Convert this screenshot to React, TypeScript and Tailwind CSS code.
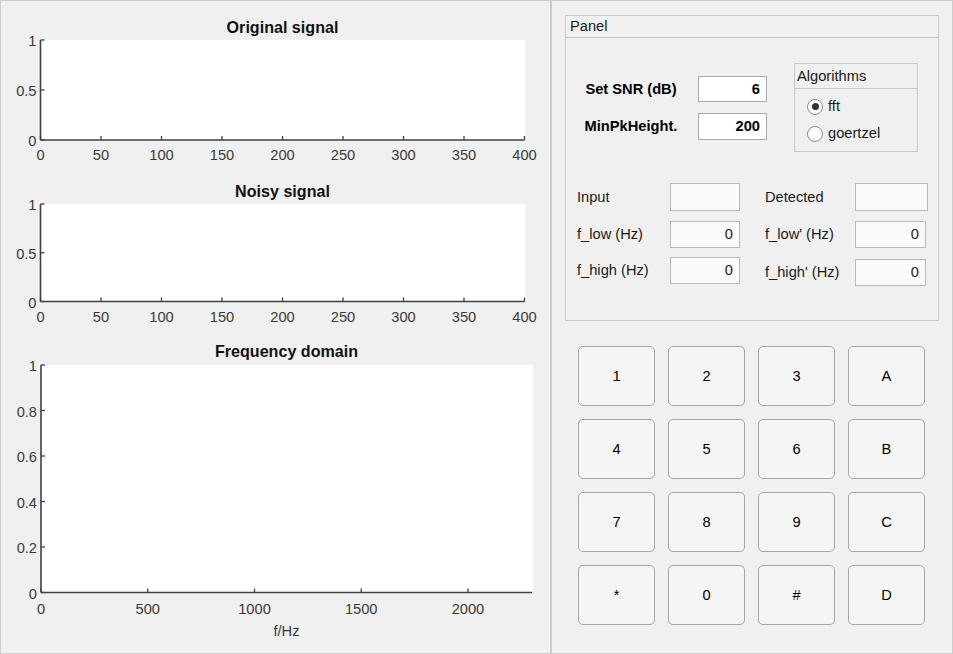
import React from "react";

type Tick = [number, string];

interface AxesProps {
  h: number;
  title: string;
  titleBase: number;
  x0: number;
  x1: number;
  top: number;
  bottom: number;
  xmax: number;
  xticks: Tick[];
  yticks: Tick[];
  xlabelBase: number;
  xlabel?: string;
  xlabelBaseline?: number;
}

function Axes({ h, title, titleBase, x0, x1, top, bottom, xmax, xticks, yticks, xlabelBase, xlabel, xlabelBaseline }: AxesProps) {
  const px = (v: number) => x0 + (v / xmax) * (x1 - x0);
  const py = (v: number) => bottom - v * (bottom - top);
  const axis = "#404040";
  return (
    <svg width={549} height={h} className="block shrink-0" style={{ fontFamily: "'Liberation Sans', Arial, sans-serif" }}>
      <rect x={x0} y={top} width={x1 - x0 + 1} height={bottom - top} fill="#ffffff" />
      <text x={(x0 + x1) / 2} y={titleBase} textAnchor="middle" fontSize={16.1} fontWeight={700} fill="#111">
        {title}
      </text>
      <line x1={x0} y1={top} x2={x0} y2={bottom} stroke={axis} strokeWidth={1.6} />
      <line x1={x0} y1={bottom} x2={x1} y2={bottom} stroke={axis} strokeWidth={1.6} />
      {xticks.map(([v, label]) => (
        <g key={label}>
          <line x1={px(v)} y1={bottom} x2={px(v)} y2={bottom - 4} stroke={axis} strokeWidth={1.3} />
          <text x={px(v)} y={xlabelBase} textAnchor="middle" fontSize={14.67} fill="#3a3a3a">
            {label}
          </text>
        </g>
      ))}
      {yticks.map(([v, label]) => (
        <g key={label}>
          <line x1={x0} y1={py(v)} x2={x0 + 4} y2={py(v)} stroke={axis} strokeWidth={1.3} />
          <text x={x0 - 4} y={py(v) + 6} textAnchor="end" fontSize={14.67} fill="#3a3a3a">
            {label}
          </text>
        </g>
      ))}
      {xlabel ? (
        <text x={(x0 + x1) / 2} y={xlabelBaseline} textAnchor="middle" fontSize={14.67} fill="#3a3a3a">
          {xlabel}
        </text>
      ) : null}
    </svg>
  );
}

const timeTicks: Tick[] = [0, 50, 100, 150, 200, 250, 300, 350, 400].map((v) => [v, String(v)]);
const halfTicks: Tick[] = [
  [0, "0"],
  [0.5, "0.5"],
  [1, "1"],
];
const freqTicks: Tick[] = [0, 500, 1000, 1500, 2000].map((v) => [v, String(v)]);
const fineTicks: Tick[] = [
  [0, "0"],
  [0.2, "0.2"],
  [0.4, "0.4"],
  [0.6, "0.6"],
  [0.8, "0.8"],
  [1, "1"],
];

function Field({ value, w = "w-[70px]", h = "h-[28px]", extra = "" }: { value?: string; w?: string; h?: string; extra?: string }) {
  return (
    <div className={`${w} ${h} ${extra} border border-[#b9b9b9] bg-[#fafafa] flex items-center justify-end pr-[6px] text-[#1a1a1a]`}>
      {value}
    </div>
  );
}

function Radio({ checked, label }: { checked: boolean; label: string }) {
  return (
    <div className="h-[27px] flex items-center">
      <div className="w-[16px] h-[16px] rounded-full border border-[#8c8c8c] bg-white flex items-center justify-center">
        {checked ? <div className="w-[7px] h-[7px] rounded-full bg-[#333333]" /> : null}
      </div>
      <span className="ml-[5px] text-[#1a1a1a]">{label}</span>
    </div>
  );
}

const keys = ["1", "2", "3", "A", "4", "5", "6", "B", "7", "8", "9", "C", "*", "0", "#", "D"];

export default function App() {
  return (
    <div className="w-[953px] h-[654px] bg-[#f0f0f0] border border-[#cdcdcd] flex font-['Liberation_Sans',Arial,sans-serif] text-[14.67px] leading-none">
      {/* plots */}
      <div className="w-[549px] h-full flex flex-col">
        <Axes
          h={171}
          title="Original signal"
          titleBase={32}
          x0={39.5}
          x1={523.5}
          top={39}
          bottom={139}
          xmax={400}
          xticks={timeTicks}
          yticks={halfTicks}
          xlabelBase={159}
        />
        <Axes
          h={165}
          title="Noisy signal"
          titleBase={25}
          x0={39.5}
          x1={523.5}
          top={32}
          bottom={129.5}
          xmax={400}
          xticks={timeTicks}
          yticks={halfTicks}
          xlabelBase={150}
        />
        <Axes
          h={316}
          title="Frequency domain"
          titleBase={20}
          x0={40}
          x1={531}
          top={28}
          bottom={255.5}
          xmax={2300}
          xticks={freqTicks}
          yticks={fineTicks}
          xlabelBase={276.5}
          xlabel="f/Hz"
          xlabelBaseline={299}
        />
      </div>

      <div className="w-[2px] h-full bg-[#cccccc]" />

      {/* controls */}
      <div className="w-[400px] h-full pl-[13px] pt-[14px]">
        <div className="w-[374px] h-[306px] border border-[#c9c9c9] flex flex-col">
          <div className="h-[22px] border-b border-[#c9c9c9] pl-[4px] flex items-center text-[#1a1a1a]">Panel</div>
          <div className="pt-[25px]">
            <div className="flex items-start">
              <div className="pl-[12px] pt-[13px] flex flex-col">
                <div className="flex items-center h-[26px]">
                  <div className="w-[106px] text-center font-bold text-black">Set SNR (dB)</div>
                  <div className="ml-[14px] w-[69px] h-[26px] border border-[#a9a9a9] bg-white flex items-center justify-end pr-[6px] font-bold text-black">
                    6
                  </div>
                </div>
                <div className="flex items-center h-[27px] mt-[11px]">
                  <div className="w-[106px] text-center font-bold text-black">MinPkHeight.</div>
                  <div className="ml-[14px] w-[69px] h-[27px] border border-[#a9a9a9] bg-white flex items-center justify-end pr-[6px] font-bold text-black">
                    200
                  </div>
                </div>
              </div>
              <div className="ml-[27px] w-[124px] h-[89px] border border-[#c9c9c9] flex flex-col">
                <div className="h-[25px] border-b border-[#c9c9c9] pl-[2px] flex items-center text-[#1a1a1a]">Algorithms</div>
                <div className="pl-[12px] pt-[4px]">
                  <Radio checked label="fft" />
                  <Radio checked={false} label="goertzel" />
                </div>
              </div>
            </div>

            <div className="mt-[31px] pl-[11px] flex flex-col">
              <div className="flex items-center h-[28px]">
                <div className="w-[93px] text-[#1a1a1a]">Input</div>
                <Field />
                <div className="ml-[25px] w-[90px] text-[#1a1a1a]">Detected</div>
                <Field w="w-[73px]" />
              </div>
              <div className="flex items-center h-[27px] mt-[10px]">
                <div className="w-[93px] text-[#1a1a1a]">f_low (Hz)</div>
                <Field value="0" h="h-[27px]" />
                <div className="ml-[25px] w-[90px] text-[#1a1a1a]">f_low' (Hz)</div>
                <Field value="0" w="w-[71px]" h="h-[27px]" />
              </div>
              <div className="flex items-center h-[27px] mt-[9px]">
                <div className="w-[93px] text-[#1a1a1a]">f_high (Hz)</div>
                <Field value="0" h="h-[27px]" />
                <div className="ml-[25px] w-[90px] text-[#1a1a1a] mt-[3px]">f_high' (Hz)</div>
                <Field value="0" w="w-[71px]" h="h-[27px]" extra="mt-[3px]" />
              </div>
            </div>
          </div>
        </div>

        <div className="mt-[25px] pl-[13px] grid grid-cols-[repeat(4,77px)] auto-rows-[60px] gap-x-[13px] gap-y-[13px]">
          {keys.map((k) => (
            <button
              key={k}
              className="rounded-[5px] border border-[#a6a6a6] bg-[#f5f5f5] flex items-center justify-center text-black"
            >
              {k}
            </button>
          ))}
        </div>
      </div>
    </div>
  );
}
